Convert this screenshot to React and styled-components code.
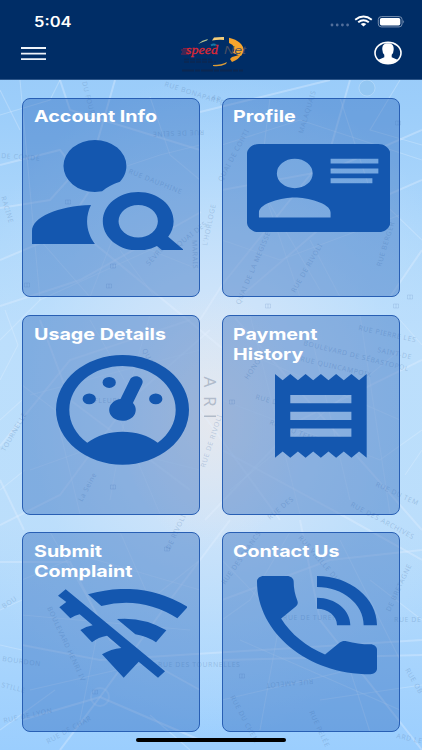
import React from "react";
import styled, { createGlobalStyle } from "styled-components";

const BLUE = "#1457af";

const GlobalStyle = createGlobalStyle`
  * { box-sizing: border-box; }
  body { margin: 0; font-family: Inter, "Liberation Sans", sans-serif; }
`;

const Screen = styled.div`
  position: relative;
  width: 422px;
  height: 750px;
  overflow: hidden;
  display: flex;
  flex-direction: column;
  background:
    radial-gradient(ellipse 90px 130px at 212px 420px, rgba(240, 232, 230, 0.6) 0%, rgba(240, 232, 230, 0) 100%),
    radial-gradient(ellipse 270px 330px at 215px 405px, #d6e8fa 0%, #cce3fa 35%, rgba(188, 222, 252, 0.6) 70%, rgba(188, 222, 252, 0) 100%),
    linear-gradient(180deg, #95c8f9 0%, #9dcefa 15%, #bcdffc 45%, #bbdefb 70%, #9bcefe 100%);
`;

const MapLayer = styled.svg`
  position: absolute;
  inset: 0;
  width: 422px;
  height: 750px;
`;

const Header = styled.header`
  position: relative;
  height: 80px;
  flex: none;
  background: #002d66;
  border-bottom: 1px solid #2b5488;
  display: flex;
  flex-direction: column;
`;

const StatusBar = styled.div`
  height: 34px;
  padding: 9px 17px 0 34px;
  display: flex;
  justify-content: space-between;
  align-items: center;
`;

const Clock = styled.span`
  color: #fff;
  font-size: 14px;
  font-weight: 600;
  line-height: 20px;
  transform: scaleX(1.18);
  transform-origin: left center;
`;

const StatusIcons = styled.svg`
  width: 76px;
  height: 14px;
`;

const NavBar = styled.div`
  height: 45px;
  padding: 0 19px 0 20px;
  display: grid;
  grid-template-columns: 66px 1fr 66px;
  align-items: start;
`;

const MenuIcon = styled.svg`
  width: 27px;
  height: 15px;
  margin-top: 11.5px;
`;

const Logo = styled.svg`
  width: 70px;
  height: 42px;
  justify-self: center;
  margin-left: 9px;
  margin-top: 0.5px;
`;

const UserIcon = styled.svg`
  width: 30px;
  height: 26px;
  margin-top: 6px;
  justify-self: end;
`;

const Grid = styled.main`
  position: relative;
  padding: 17.5px 22px 0;
  display: grid;
  grid-template-columns: 178.4px 178.4px;
  grid-auto-rows: 199.7px;
  column-gap: 21.2px;
  row-gap: 17.7px;
`;

const Card = styled.section`
  border: 1px solid #285fb4;
  border-radius: 8px;
  background: rgba(26, 90, 178, 0.37);
  padding: 8.9px 0 0;
  overflow: hidden;
`;

const Title = styled.h2`
  margin: 0 0 0 10.6px;
  width: 130px;
  color: #fff;
  font-size: 16.4px;
  font-weight: 650;
  line-height: 19.8px;
  white-space: pre-line;
  transform: scaleX(1.2);
  transform-origin: left top;
`;

const CardIcon = styled.svg`
  display: block;
  width: ${(p) => p.$w}px;
  height: ${(p) => p.$h}px;
  margin: ${(p) => p.$top}px 0 0 ${(p) => p.$left - 1}px;
  fill: ${BLUE};
`;

const HomeIndicator = styled.div`
  position: absolute;
  left: 136px;
  top: 738px;
  width: 150px;
  height: 4px;
  border-radius: 2px;
  background: #000;
`;

const cards = [
  {
    title: "Account Info", box: "2 4 19.13 17", left: 10.3, top: 12.4, w: 150.5, h: 110.5,
    d: "M15.5,12C18,12 20,14 20,16.5C20,17.38 19.75,18.21 19.31,18.9L22.39,22L21,23.39L17.88,20.32C17.19,20.75 16.37,21 15.5,21C13,21 11,19 11,16.5C11,14 13,12 15.5,12M15.5,14A2.5,2.5 0 0,0 13,16.5A2.5,2.5 0 0,0 15.5,19A2.5,2.5 0 0,0 18,16.5A2.5,2.5 0 0,0 15.5,14M10,4A4,4 0 0,1 14,8C14,8.91 13.69,9.75 13.18,10.43C12.32,10.75 11.55,11.26 10.91,11.9L10,12A4,4 0 0,1 6,8A4,4 0 0,1 10,4M2,20V18C2,15.88 5.31,14.14 9.5,14C9.18,14.78 9,15.62 9,16.5C9,17.79 9.38,19 10,20H2Z",
  },
  {
    title: "Profile", box: "0 3 24 18", left: 25, top: 16.8, w: 143.3, h: 88.3,
    d: "M2,3H22C23.05,3 24,3.95 24,5V19C24,20.05 23.05,21 22,21H2C0.95,21 0,20.05 0,19V5C0,3.95 0.95,3 2,3M14,6V7H22V6H14M14,8V9H22V8H14M14,10V11H21V10H14M8,13.91C6,13.91 2,15 2,17V18H14V17C14,15 10,13.91 8,13.91M8,6A3,3 0 0,0 5,9A3,3 0 0,0 8,12A3,3 0 0,0 11,9A3,3 0 0,0 8,6Z",
  },
  {
    title: "Usage Details", box: "2 2 20 20", left: 34, top: 10.7, w: 133, h: 109.7,
    d: "M12,2A10,10 0 0,0 2,12A10,10 0 0,0 12,22A10,10 0 0,0 22,12A10,10 0 0,0 12,2M12,4A8,8 0 0,1 20,12C20,14.4 19,16.5 17.3,18C15.9,16.7 14,16 12,16C10,16 8.2,16.7 6.7,18C5,16.5 4,14.4 4,12A8,8 0 0,1 12,4M14,5.89C13.62,5.9 13.26,6.15 13.1,6.54L11.81,9.77L11.71,10C11,10.13 10.41,10.6 10.14,11.26C9.73,12.29 10.23,13.45 11.26,13.86C12.29,14.27 13.45,13.77 13.86,12.74C14.12,12.08 14,11.32 13.57,10.76L13.67,10.5L14.96,7.29L14.97,7.26C15.17,6.75 14.92,6.17 14.41,5.96C14.28,5.91 14.15,5.89 14,5.89M10,6A1,1 0 0,0 9,7A1,1 0 0,0 10,8A1,1 0 0,0 11,7A1,1 0 0,0 10,6M7,9A1,1 0 0,0 6,10A1,1 0 0,0 7,11A1,1 0 0,0 8,10A1,1 0 0,0 7,9M17,9A1,1 0 0,0 16,10A1,1 0 0,0 17,11A1,1 0 0,0 18,10A1,1 0 0,0 17,9Z",
  },
  {
    title: "Payment\nHistory", box: "3 2 18 20", left: 53.6, top: 9.8, w: 91.7, h: 83.7,
    d: "M18 17H6v-2h12v2zm0-4H6v-2h12v2zm0-4H6V7h12v2zM3 22l1.5-1.5L6 22l1.5-1.5L9 22l1.5-1.5L12 22l1.5-1.5L15 22l1.5-1.5L18 22l1.5-1.5L21 22V2l-1.5 1.5L18 2l-1.5 1.5L15 2l-1.5 1.5L12 2l-1.5 1.5L9 2 7.5 3.5 6 2 4.5 3.5 3 2v20z",
  },
  {
    title: "Submit\nComplaint", box: "173 207 389 266", left: 35.7, top: 7.5, w: 129.7, h: 88.7,
    d: "M173 227L196 208L494 454L473 473L415 425L370 473L305 403Q332 387 363 384L320 347Q294 351 275 367L240 330Q257 320 277 316L238 283Q224 286 210 295L177 262L198 246ZM263 223Q425 177 562 261L531 295Q424 227 303 258ZM350 297Q430 290 498 331L467 367Q440 349 405 343Z",
  },
  {
    title: "Contact Us", box: "3 3 18 18", left: 35.3, top: 14.5, w: 120, h: 98.3,
    d: "M20 15.5c-1.25 0-2.45-.2-3.57-.57-.35-.11-.74-.03-1.02.24l-2.2 2.2c-2.83-1.44-5.15-3.75-6.59-6.59l2.2-2.21c.28-.26.36-.65.25-1C8.7 6.45 8.5 5.25 8.5 4c0-.55-.45-1-1-1H4c-.55 0-1 .45-1 1 0 9.39 7.61 17 17 17 .55 0 1-.45 1-1v-3.5c0-.55-.45-1-1-1zM19 12h2c0-4.97-4.03-9-9-9v2c3.87 0 7 3.13 7 7zm-4 0h2c0-2.76-2.24-5-5-5v2c1.66 0 3 1.34 3 3z",
  },
];

const majorRoads = [
  "M0 306L80 280L201 212", "M0 208L50 200L95 150L115 80", "M0 165L60 150L90 190L60 235L0 260",
  "M60 80L70 110L200 150", "M200 112L330 80", "M200 320L222 285L330 150L350 80",
  "M0 446L70 360L190 320", "M0 562L70 562L110 640L200 690", "M0 525L60 495L130 400L210 330",
  "M22 645L100 660L422 640", "M100 697L170 600L230 520", "M100 697L60 750", "M100 697L22 720",
  "M100 697L200 740", "M205 520L300 420L422 360", "M235 318L422 530", "M222 450L340 514L422 560",
  "M222 660L422 655", "M300 520L320 620L422 750", "M222 600L330 560L422 550", "M222 190L330 170L422 130",
  "M240 297L330 220L422 180", "M40 320L70 400L190 490", "M200 410L280 520", "M390 297L422 250",
  "M90 240L222 348", "M0 480L24 530",
];

const minorRoads = [
  "M0 115L50 100L60 80", "M20 80L40 300", "M0 340L40 300L150 250L200 270", "M40 240L90 297L120 220",
  "M120 250L155 297", "M150 97L170 155L200 180", "M70 185L160 155L200 145", "M30 395L200 350",
  "M30 470L100 445L200 470", "M22 385L55 410L80 514", "M90 320L130 390L110 500", "M150 315L120 420L160 514",
  "M222 145L300 120L422 160", "M270 98L260 180L300 297", "M222 240L280 260L400 215", "M340 98L370 190L422 240",
  "M310 240L340 297", "M250 170L320 290", "M240 350L400 420", "M222 400L380 460L422 430",
  "M250 315L300 514", "M310 330L350 500", "M360 315L390 514", "M230 490L400 350", "M22 580L80 555L200 590",
  "M50 532L100 620L80 720", "M22 615L190 630", "M120 532L150 600L200 560", "M30 690L160 660",
  "M222 560L280 620L260 730", "M240 640L400 710", "M222 700L350 670L370 732", "M290 532L250 600L222 620",
  "M340 540L400 660", "M370 580L422 620", "M400 80L370 130L422 145", "M0 490L25 470", "M0 610L22 600",
  "M0 730L55 690", "M405 475L422 450", "M150 715L190 750", "M320 700L422 685",
  "M0 420L22 400", "M5 310L18 345L0 380", "M400 320L422 345", "M0 645L22 650", "M0 90L20 130",
];

const streetLabels = [
  [164, 86, 18, "RUE BONAPARTE"], [82, 82, 76, "DU FOUR"], [204, 130, 178, "RUE DE SEINE"],
  [1, 158, 4, "DE CONDÉ"], [128, 173, 22, "RUE DAUPHINE"], [1, 197, 73, "RACINE"],
  [149, 266, -48, "SÈVRES"], [179, 247, -38, "QUAI DES"], [192, 240, 88, "MARAIS"],
  [303, 134, -73, "MALAQUAIS"], [222, 182, -62, "QUAI DE CONTI"], [207, 246, -78, "L'HORLOGE"],
  [240, 305, -67, "QUAI DE LA MEGISSERIE"], [295, 293, -60, "RUE DE RIVOLI"], [381, 267, -73, "RUE BERGER"],
  [5, 452, -60, "TOURNELLE"], [82, 502, -62, "La Seine"], [94, 403, 0, "FLEURUS"], [142, 350, 63, "QUAI"],
  [358, 330, 12, "RUE PIERRE LES"], [377, 352, 12, "SAINT-DE"],
  [303, 345, 14, "BOULEVARD DE SÉBASTOPOL"], [300, 361, 13, "RUE QUINCAMPOIX"],
  [248, 380, -56, "HONORÉ"], [255, 399, 15, "RUE DU"], [269, 424, 21, "RUE DU TEMPLE"],
  [375, 486, 25, "RUE DU TEM"], [350, 506, 28, "RUE DES ARCHIVES"], [270, 520, -40, "RUE DES"],
  [205, 468, -72, "RUE DE RIVOLI"],
  [158, 667, 0, "RUE DES TOURNELLES"], [2, 661, 8, "BOURDON"], [1, 687, 14, "STILLE"],
  [4, 723, -12, "RUE DE LYON"], [48, 744, -29, "RUE DE CHAR"], [47, 608, 65, "BOULEVARD HENRI IV"],
  [4, 609, -35, "BOU"], [170, 550, -65, "DE RIVOLI"], [283, 620, 0, "RUE DE TURENNE"],
  [313, 679, 175, "RUE AMELOT"], [230, 697, 62, "RUE DU CHEM"], [309, 712, 65, "RUE PELÉE"],
  [225, 585, -55, "RUE DES FRANCS"], [298, 538, 49, "RUE VIEILLE DU TEMPLE"],
  [390, 612, -65, "DE BRETAGNE"], [394, 622, 0, "RUE DE"],
  [405, 670, 60, "RUE OB"], [396, 738, 12, "ARD LE"], [211, 99, 20, "AR"],
];

const squares = [
  [113, 266], [109, 286], [27, 285], [68, 202], [113, 487], [167, 549], [95, 692],
  [268, 306], [396, 306], [232, 402], [398, 123], [242, 676], [410, 297],
];

function StreetMap() {
  return (
    <MapLayer viewBox="0 0 422 750" aria-hidden="true">
      <g fill="none" stroke="#e4f1ff">
        {majorRoads.map((d) => <path key={d} d={d} strokeWidth="2" strokeOpacity=".34" />)}
        {minorRoads.map((d) => <path key={d} d={d} strokeWidth="1.1" strokeOpacity=".3" />)}
        <circle cx="100" cy="697" r="9" strokeWidth="2" strokeOpacity=".28" />
        <circle cx="367" cy="88" r="8" fill="#86bde6" fillOpacity=".35" strokeOpacity=".3" />
      </g>
      <g fill="#5f86b4" fillOpacity=".34" fontFamily="Noto Sans, sans-serif" fontSize="6.9" letterSpacing=".6">
        {streetLabels.map(([x, y, r, text]) => (
          <text key={`${x}-${y}`} transform={`translate(${x} ${y}) rotate(${r})`}>{text}</text>
        ))}
      </g>
      <g fill="none" stroke="#5b85b7" strokeOpacity=".22" strokeWidth=".8">
        {squares.map(([x, y]) => <path key={`${x}-${y}`} d={`M${x - 2.5} ${y - 2}h5v4h-5zM${x} ${y - 2}v4`} />)}
      </g>
      <g fill="#8795aa" fillOpacity=".55" fontFamily="Noto Sans, sans-serif" fontSize="17">
        <text transform="translate(203.5 376.5) rotate(90)">A</text>
        <text transform="translate(203.5 396) rotate(90)">R</text>
        <path d="M204 415.5H216V417H204Z" />
      </g>
    </MapLayer>
  );
}

export default function App() {
  return (
    <>
      <GlobalStyle />
      <Screen>
        <StreetMap />
        <Header>
          <StatusBar>
            <Clock>5:04</Clock>
            <StatusIcons viewBox="0 0 76 14">
              <g fill="#526f9b">
                <circle cx="3" cy="10" r="1.4" /><circle cx="8.2" cy="10" r="1.4" />
                <circle cx="13.4" cy="10" r="1.4" /><circle cx="18.6" cy="10" r="1.4" />
              </g>
              <g fill="none" stroke="#fff" strokeWidth="2">
                <path d="M26.2 4.7Q34.5 -1.6 42.8 4.7" /><path d="M29.2 7.3Q34.5 3.1 39.8 7.3" />
              </g>
              <path fill="#fff" d="M31.7 9Q34.5 6.9 37.3 9L34.5 11.6Z" />
              <rect x="49.3" y="1.6" width="23.8" height="10.3" rx="3" fill="none" stroke="#7890b1" />
              <rect x="50.9" y="3.1" width="20.4" height="7.3" rx="1.7" fill="#fff" />
              <path d="M74.3 5q1.7 1.8 0 3.6z" fill="#8da0bd" />
            </StatusIcons>
          </StatusBar>
          <NavBar>
            <MenuIcon viewBox="0 0 27 15">
              <path d="M1 2h25M1 7.6h25M1 13.2h25" stroke="#eef3fa" strokeWidth="1.8" />
            </MenuIcon>
            <Logo viewBox="0 0 70 42">
              <path d="M17 9Q21 5.2 27 4L26 5.5Q21 7 17 9Z" fill="#b9c88f" />
              <path d="M33 2.6Q38 1.8 43 2V5Q37 4.5 31 5.5Z" fill="#f3cd79" />
              <path d="M48 2.7Q62 6 63 16L60 21L52 18Q56 11 48 8Z" fill="#f7a52d" />
              <path d="M51 22L60 19.5Q58 24.5 51 27L49 24Z" fill="#ef9c2b" />
              <path d="M32 30Q41 30 46 27L45 29Q39 32 32 31Z" fill="#dc9c36" />
              <path d="M30 10.5Q33 8.5 35 10.5" stroke="#1778a8" strokeWidth="2" fill="none" />
              <path d="M0 15H8M1 17H9M0 19H8M2 13.5H9" stroke="#9c1f42" strokeWidth=".8" />
              <text x="5" y="18.8" textLength="32" lengthAdjust="spacingAndGlyphs" fill="#dc2835" fontSize="12" fontStyle="italic" fontFamily="Liberation Serif, serif" stroke="#dc2835" strokeWidth=".3">speed</text>
              <text x="43" y="19" textLength="22" lengthAdjust="spacingAndGlyphs" fill="#4b5062" fontSize="11" fontStyle="italic" fontFamily="Liberation Sans, sans-serif">Net</text>
              <path d="M3 24.5H31M3 27H35" stroke="#0b2751" strokeWidth="1.3" strokeDasharray="5 1" />
              <path d="M1 35.5H62" stroke="#0b2751" strokeWidth="1.8" strokeDasharray="12 1 5 1" />
            </Logo>
            <UserIcon viewBox="0 0 30 26">
              <ellipse cx="15" cy="13" rx="13" ry="10.7" fill="none" stroke="#fff" strokeWidth="1.6" />
              <path fill="#fff" d="M9.3 9.5C9 5 11.4 3.2 15 3.2S21 5 20.7 9.5Q20.5 13.3 18.7 14.8V17.2L24.5 19.7Q20.7 23.5 15 23.5T5.5 19.7L11.3 17.2V14.8Q9.5 13.3 9.3 9.5Z" />
            </UserIcon>
          </NavBar>
        </Header>
        <Grid>
          {cards.map((c) => (
            <Card key={c.title}>
              <Title>{c.title}</Title>
              <CardIcon viewBox={c.box} preserveAspectRatio="none" $left={c.left} $top={c.top} $w={c.w} $h={c.h}>
                <path d={c.d} fillRule="evenodd" />
              </CardIcon>
            </Card>
          ))}
        </Grid>
        <HomeIndicator />
      </Screen>
    </>
  );
}
